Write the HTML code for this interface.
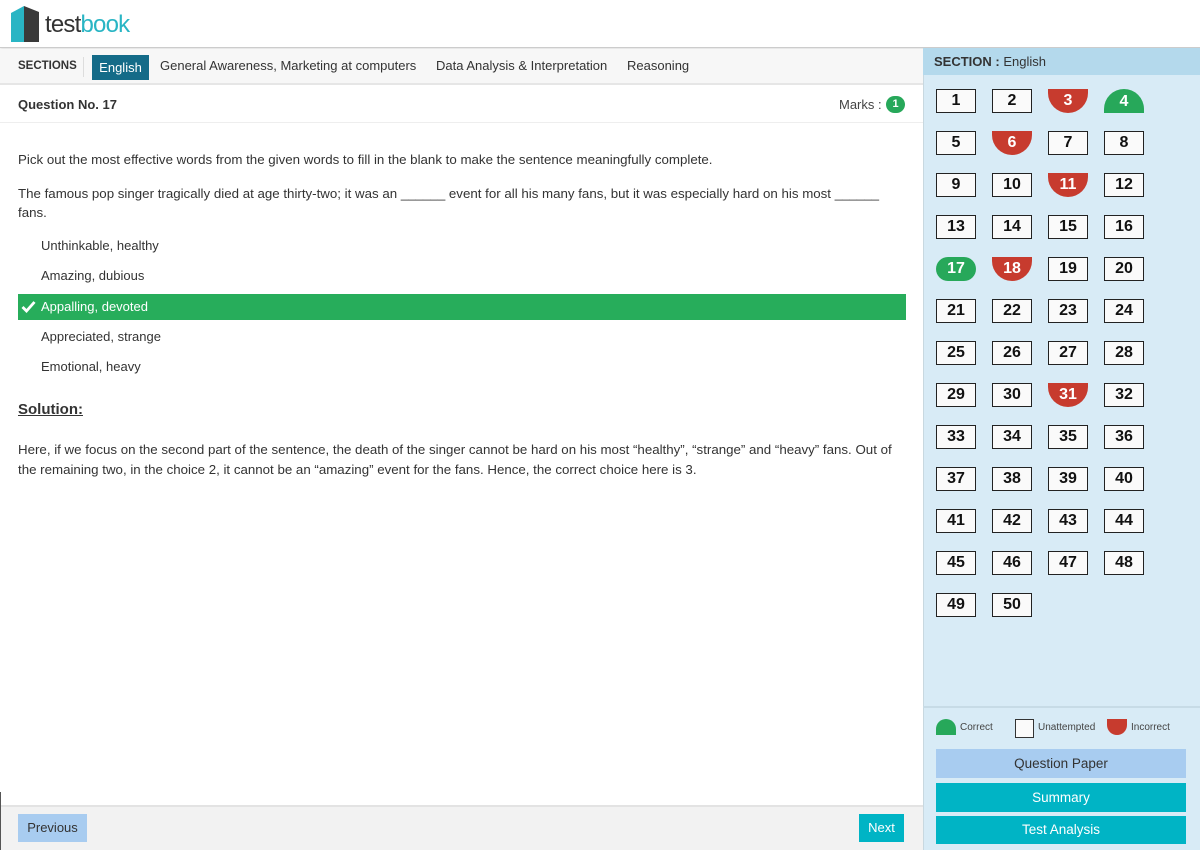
<!DOCTYPE html>
<html><head><meta charset="utf-8"><style>
*{margin:0;padding:0;box-sizing:border-box}
body{width:1200px;height:850px;position:relative;overflow:hidden;font-family:"Liberation Sans",Arial,sans-serif;background:#fff;color:#333}
.a{position:absolute}
.top{left:0;top:0;width:1200px;height:48px;background:#fff;border-bottom:1px solid #ccc;box-shadow:0 1px 3px rgba(0,0,0,.15)}
.nav{left:0;top:49px;width:923px;height:36px;background:#f7f7f7;border-bottom:2px solid #e6e6e6;font-size:13px}
.nav span{position:absolute;top:0;line-height:34px}
.qh{left:0;top:86px;width:923px;height:37px;border-bottom:1px solid #eee}
.txt{font-size:13.3px;color:#333}
.opt{left:18px;width:888px;height:26px;font-size:13px;line-height:26px;padding-left:23px;color:#333}
.side{left:923px;top:48px;width:277px;height:802px;background:#d8ebf6;border-left:1px solid #c8d8e0}
.sh{left:923px;top:48px;width:277px;height:27px;background:#b4d9ec;font-size:13px;line-height:27px;padding-left:11px;color:#333}
.b{position:absolute;width:40px;height:24px;border:1.5px solid #222;background:#fafafa;font-weight:bold;font-size:16px;text-align:center;line-height:21px;color:#111}
.b.r{background:#c73b2e;border:none;color:#fff;border-radius:0 0 20px 20px;line-height:24px}
.b.g{background:#27a85a;border:none;color:#fff;border-radius:20px 20px 0 0;line-height:26px}
.b.p{background:#27a85a;border:none;color:#fff;border-radius:12px;line-height:24px}
.btn{left:936px;width:250px;height:29px;text-align:center;line-height:29px;font-size:13.5px;color:#fff;background:#00b4c5}
</style></head><body>
<div class="a top"></div>
<svg class="a" style="left:11px;top:5px" width="34" height="38" viewBox="0 0 34 38"><polygon points="0,8 13,1 13,37 0,37" fill="#29b5c4"/><polygon points="13,1 28,7 28,37 13,37" fill="#3a3a3a"/></svg>
<div class="a" style="left:45px;top:10px;font-size:24px;letter-spacing:-0.8px;line-height:30px"><span style="color:#333">test</span><span style="color:#29b5c4">book</span></div>

<div class="a nav">
<span style="left:18px;font-size:11.5px;font-weight:bold;color:#333">SECTIONS</span>
<div class="a" style="left:83px;top:8px;width:1px;height:20px;background:#ddd"></div>
<div class="a" style="left:92px;top:6px;width:57px;height:25px;background:#146b88;color:#fff;line-height:25px;text-align:center">English</div>
<span style="left:160px">General Awareness, Marketing at computers</span>
<span style="left:436px">Data Analysis &amp; Interpretation</span>
<span style="left:627px">Reasoning</span>
</div>

<div class="a qh">
<div class="a" style="left:18px;top:11px;font-size:13px;font-weight:bold;color:#333">Question No. 17</div>
<div class="a" style="left:839px;top:11px;font-size:13px;color:#444">Marks :</div>
<div class="a" style="left:886px;top:10px;width:19px;height:17px;border-radius:9px;background:#27a85a;color:#fff;font-size:11px;font-weight:bold;text-align:center;line-height:17px">1</div>
</div>

<div class="a txt" style="left:18px;top:152px">Pick out the most effective words from the given words to fill in the blank to make the sentence meaningfully complete.</div>
<div class="a txt" style="left:18px;top:184px;width:870px;line-height:19px">The famous pop singer tragically died at age thirty-two; it was an ______ event for all his many fans, but it was especially hard on his most ______ fans.</div>
<div class="a opt" style="top:233px">Unthinkable, healthy</div>
<div class="a opt" style="top:263px">Amazing, dubious</div>
<div class="a opt" style="top:294px;background:#27ad5b;color:#fff">Appalling, devoted</div>
<svg class="a" style="left:21px;top:300px" width="15" height="13" viewBox="0 0 15 13"><path d="M1.5 7 L5.5 11 L13.5 2" stroke="#fff" stroke-width="2.8" fill="none"/></svg>
<div class="a opt" style="top:324px">Appreciated, strange</div>
<div class="a opt" style="top:354px">Emotional, heavy</div>
<div class="a" style="left:18px;top:401px;font-size:15px;font-weight:bold;text-decoration:underline;color:#333">Solution:</div>
<div class="a txt" style="left:18px;top:440px;width:880px;line-height:19.5px">Here, if we focus on the second part of the sentence, the death of the singer cannot be hard on his most “healthy”, “strange” and “heavy” fans. Out of the remaining two, in the choice 2, it cannot be an “amazing” event for the fans. Hence, the correct choice here is 3.</div>

<div class="a" style="left:0;top:805px;width:923px;height:45px;background:#f2f2f2;border-top:2px solid #e3e3e3"></div>
<div class="a" style="left:0;top:792px;width:1px;height:58px;background:#555"></div>
<div class="a" style="left:18px;top:814px;width:69px;height:28px;background:#a8ccf0;font-size:13px;line-height:28px;text-align:center;color:#333">Previous</div>
<div class="a" style="left:859px;top:814px;width:45px;height:28px;background:#00b4c5;font-size:13px;line-height:28px;text-align:center;color:#fff">Next</div>

<div class="a side"></div>
<div class="a sh"><b>SECTION :</b> English</div>
<div class="a" style="left:923px;top:706px;width:277px;height:2px;background:#c7dbe6"></div>
<div class="a" style="left:936px;top:719px;width:20px;height:16px;background:#27a85a;border-radius:10px 10px 0 0"></div>
<div class="a" style="left:960px;top:722px;font-size:10px;color:#444">Correct</div>
<div class="a" style="left:1015px;top:719px;width:19px;height:19px;border:1.5px solid #333;background:#fafafa"></div>
<div class="a" style="left:1038px;top:722px;font-size:10px;color:#444">Unattempted</div>
<div class="a" style="left:1107px;top:719px;width:20px;height:16px;background:#c73b2e;border-radius:0 0 10px 10px"></div>
<div class="a" style="left:1131px;top:722px;font-size:10px;color:#444">Incorrect</div>
<div class="a btn" style="top:749px;background:#a8ccf0;color:#333">Question Paper</div>
<div class="a btn" style="top:783px">Summary</div>
<div class="a btn" style="top:816px;height:28px;line-height:28px">Test Analysis</div>

<div class="b" style="left:936px;top:89px">1</div><div class="b" style="left:992px;top:89px">2</div><div class="b r" style="left:1048px;top:89px">3</div><div class="b g" style="left:1104px;top:89px">4</div>
<div class="b" style="left:936px;top:131px">5</div><div class="b r" style="left:992px;top:131px">6</div><div class="b" style="left:1048px;top:131px">7</div><div class="b" style="left:1104px;top:131px">8</div>
<div class="b" style="left:936px;top:173px">9</div><div class="b" style="left:992px;top:173px">10</div><div class="b r" style="left:1048px;top:173px">11</div><div class="b" style="left:1104px;top:173px">12</div>
<div class="b" style="left:936px;top:215px">13</div><div class="b" style="left:992px;top:215px">14</div><div class="b" style="left:1048px;top:215px">15</div><div class="b" style="left:1104px;top:215px">16</div>
<div class="b p" style="left:936px;top:257px">17</div><div class="b r" style="left:992px;top:257px">18</div><div class="b" style="left:1048px;top:257px">19</div><div class="b" style="left:1104px;top:257px">20</div>
<div class="b" style="left:936px;top:299px">21</div><div class="b" style="left:992px;top:299px">22</div><div class="b" style="left:1048px;top:299px">23</div><div class="b" style="left:1104px;top:299px">24</div>
<div class="b" style="left:936px;top:341px">25</div><div class="b" style="left:992px;top:341px">26</div><div class="b" style="left:1048px;top:341px">27</div><div class="b" style="left:1104px;top:341px">28</div>
<div class="b" style="left:936px;top:383px">29</div><div class="b" style="left:992px;top:383px">30</div><div class="b r" style="left:1048px;top:383px">31</div><div class="b" style="left:1104px;top:383px">32</div>
<div class="b" style="left:936px;top:425px">33</div><div class="b" style="left:992px;top:425px">34</div><div class="b" style="left:1048px;top:425px">35</div><div class="b" style="left:1104px;top:425px">36</div>
<div class="b" style="left:936px;top:467px">37</div><div class="b" style="left:992px;top:467px">38</div><div class="b" style="left:1048px;top:467px">39</div><div class="b" style="left:1104px;top:467px">40</div>
<div class="b" style="left:936px;top:509px">41</div><div class="b" style="left:992px;top:509px">42</div><div class="b" style="left:1048px;top:509px">43</div><div class="b" style="left:1104px;top:509px">44</div>
<div class="b" style="left:936px;top:551px">45</div><div class="b" style="left:992px;top:551px">46</div><div class="b" style="left:1048px;top:551px">47</div><div class="b" style="left:1104px;top:551px">48</div>
<div class="b" style="left:936px;top:593px">49</div><div class="b" style="left:992px;top:593px">50</div>
</body></html>
